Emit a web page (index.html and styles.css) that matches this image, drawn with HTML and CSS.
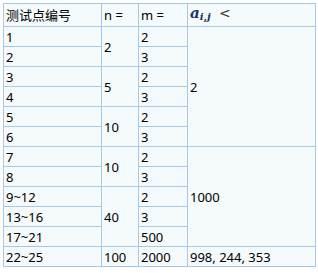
FILE: index.html
```html
<!DOCTYPE html>
<html>
<head>
<meta charset="utf-8">
<link rel="stylesheet" href="styles.css">
</head>
<body>
<table class="data">
  <colgroup>
    <col class="c1"><col class="c2"><col class="c3"><col class="c4">
  </colgroup>
  <tr><td>测试点编号</td><td>n =</td><td>m =</td><td class="math"><i>a</i><sub><i>i</i>,<i>j</i></sub> <span class="lt">&lt;</span></td></tr>
  <tr><td>1</td><td rowspan="2">2</td><td>2</td><td rowspan="6">2</td></tr>
  <tr><td>2</td><td>3</td></tr>
  <tr><td>3</td><td rowspan="2">5</td><td>2</td></tr>
  <tr><td>4</td><td>3</td></tr>
  <tr><td>5</td><td rowspan="2">10</td><td>2</td></tr>
  <tr><td>6</td><td>3</td></tr>
  <tr><td>7</td><td rowspan="2">10</td><td>2</td><td rowspan="5">1000</td></tr>
  <tr><td>8</td><td>3</td></tr>
  <tr><td>9~12</td><td rowspan="3">40</td><td>2</td></tr>
  <tr><td>13~16</td><td>3</td></tr>
  <tr><td>17~21</td><td>500</td></tr>
  <tr><td>22~25</td><td>100</td><td>2000</td><td>998, 244, 353</td></tr>
</table>
</body>
</html>
```
FILE: styles.css
```css
html, body {
  margin: 0;
  padding: 0;
  background: #ffffff;
}
body {
  padding: 3px 0 0 3px;
}
.data {
  border-collapse: collapse;
  background: #f5fafc;
  font-family: "Noto Sans", "Noto Sans CJK SC", sans-serif;
  font-size: 13px;
  color: #000;
  table-layout: fixed;
  width: 312px;
}
.c1 { width: 98px; }
.c2 { width: 37px; }
.c3 { width: 49px; }
.c4 { width: 128px; }
.data td {
  border: 1px solid #a7c9e6;
  height: 20px;
  padding: 0 0 0 2px;
  line-height: 18px;
  white-space: nowrap;
  overflow: hidden;
  box-sizing: border-box;
}
.math {
  font-family: "DejaVu Serif", serif;
  color: #1a2f66;
  font-size: 15px;
  font-weight: bold;
  vertical-align: top;
}
.math sub {
  font-size: 10px;
  vertical-align: -2px;
}
.math .lt {
  font-style: normal;
  font-weight: normal;
  font-family: "DejaVu Sans", sans-serif;
  color: #333;
  font-size: 14px;
  padding-left: 3px;
}
```
